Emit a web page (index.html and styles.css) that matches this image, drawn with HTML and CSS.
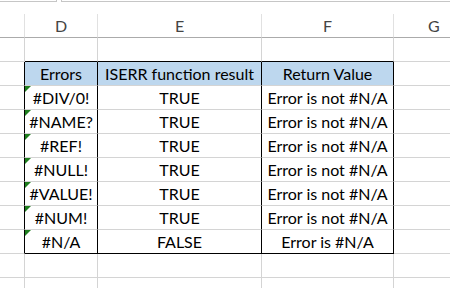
FILE: index.html
```html
<!DOCTYPE html>
<html>
<head>
<meta charset="utf-8">
<link rel="stylesheet" href="styles.css">
</head>
<body>
<div class="sheet">
  <div class="topbar">
    <div class="box box-left"></div>
    <div class="box box-right"></div>
  </div>
  <div class="row colhead">
    <div class="cell c"></div>
    <div class="cell d">D</div>
    <div class="cell e">E</div>
    <div class="cell f">F</div>
    <div class="cell g">G</div>
  </div>
  <div class="row">
    <div class="cell c"></div>
    <div class="cell d bb"></div>
    <div class="cell e bb"></div>
    <div class="cell f bb"></div>
    <div class="cell g"></div>
  </div>
  <div class="row">
    <div class="cell c br"></div>
    <div class="cell d hd br">Errors</div>
    <div class="cell e hd br">ISERR function result</div>
    <div class="cell f hd br">Return Value</div>
    <div class="cell g"></div>
  </div>
  <div class="row">
    <div class="cell c br"></div>
    <div class="cell d br tri">#DIV/0!</div>
    <div class="cell e br">TRUE</div>
    <div class="cell f br">Error is not #N/A</div>
    <div class="cell g"></div>
  </div>
  <div class="row">
    <div class="cell c br"></div>
    <div class="cell d br tri">#NAME?</div>
    <div class="cell e br">TRUE</div>
    <div class="cell f br">Error is not #N/A</div>
    <div class="cell g"></div>
  </div>
  <div class="row">
    <div class="cell c br"></div>
    <div class="cell d br tri">#REF!</div>
    <div class="cell e br">TRUE</div>
    <div class="cell f br">Error is not #N/A</div>
    <div class="cell g"></div>
  </div>
  <div class="row">
    <div class="cell c br"></div>
    <div class="cell d br tri">#NULL!</div>
    <div class="cell e br">TRUE</div>
    <div class="cell f br">Error is not #N/A</div>
    <div class="cell g"></div>
  </div>
  <div class="row">
    <div class="cell c br"></div>
    <div class="cell d br tri">#VALUE!</div>
    <div class="cell e br">TRUE</div>
    <div class="cell f br">Error is not #N/A</div>
    <div class="cell g"></div>
  </div>
  <div class="row">
    <div class="cell c br"></div>
    <div class="cell d br tri">#NUM!</div>
    <div class="cell e br">TRUE</div>
    <div class="cell f br">Error is not #N/A</div>
    <div class="cell g"></div>
  </div>
  <div class="row">
    <div class="cell c br"></div>
    <div class="cell d br bb tri">#N/A</div>
    <div class="cell e br bb">FALSE</div>
    <div class="cell f br bb">Error is #N/A</div>
    <div class="cell g"></div>
  </div>
  <div class="row">
    <div class="cell c"></div>
    <div class="cell d"></div>
    <div class="cell e"></div>
    <div class="cell f"></div>
    <div class="cell g"></div>
  </div>
  <div class="row row-last">
    <div class="cell c"></div>
    <div class="cell d"></div>
    <div class="cell e"></div>
    <div class="cell f"></div>
    <div class="cell g"></div>
  </div>
</div>
</body>
</html>
```
FILE: styles.css
```css
html, body {
  margin: 0;
  padding: 0;
  background: #ffffff;
}
body {
  width: 450px;
  height: 288px;
  overflow: hidden;
  font-family: Lato, "Liberation Sans", sans-serif;
  font-size: 16px;
  color: #000;
}
.sheet {
  display: flex;
  flex-direction: column;
  width: 450px;
  height: 288px;
  overflow: hidden;
}
.topbar {
  display: flex;
  height: 14px;
  flex-shrink: 0;
  align-items: flex-start;
}
.box {
  height: 1px;
  border-bottom: 1px solid #c6c6c6;
}
.box-left {
  width: 56px;
  border-right: 1px solid #c6c6c6;
}
.box-right {
  flex: 1;
  margin-left: 4px;
  border-left: 1px solid #c6c6c6;
}
.row {
  display: grid;
  grid-template-columns: 25px 73px 164px 132px 1fr;
  height: 24px;
  flex-shrink: 0;
}
.row-last {
  height: 10px;
}
.cell {
  box-sizing: border-box;
  border-right: 1px solid #d4d4d4;
  border-bottom: 1px solid #d4d4d4;
  text-align: center;
  line-height: 23px;
  white-space: nowrap;
  overflow: hidden;
  position: relative;
}
.cell.g {
  border-right: none;
}
.row-last .cell {
  border-bottom: none;
}
.colhead .cell {
  border-bottom: 1px solid #ababab;
  color: #444;
  line-height: 24px;
  border-right-color: #e1e1e1;
}
.colhead .cell.g {
  text-align: left;
  padding-left: 34px;
}
.cell.br {
  border-right-color: #000;
}
.cell.bb {
  border-bottom-color: #000;
}
.cell.hd {
  background: #bdd7ee;
}
.tri::before {
  content: "";
  position: absolute;
  left: 0;
  top: 0;
  width: 0;
  height: 0;
  border-top: 6px solid #1e7e1e;
  border-right: 6px solid transparent;
}
```
